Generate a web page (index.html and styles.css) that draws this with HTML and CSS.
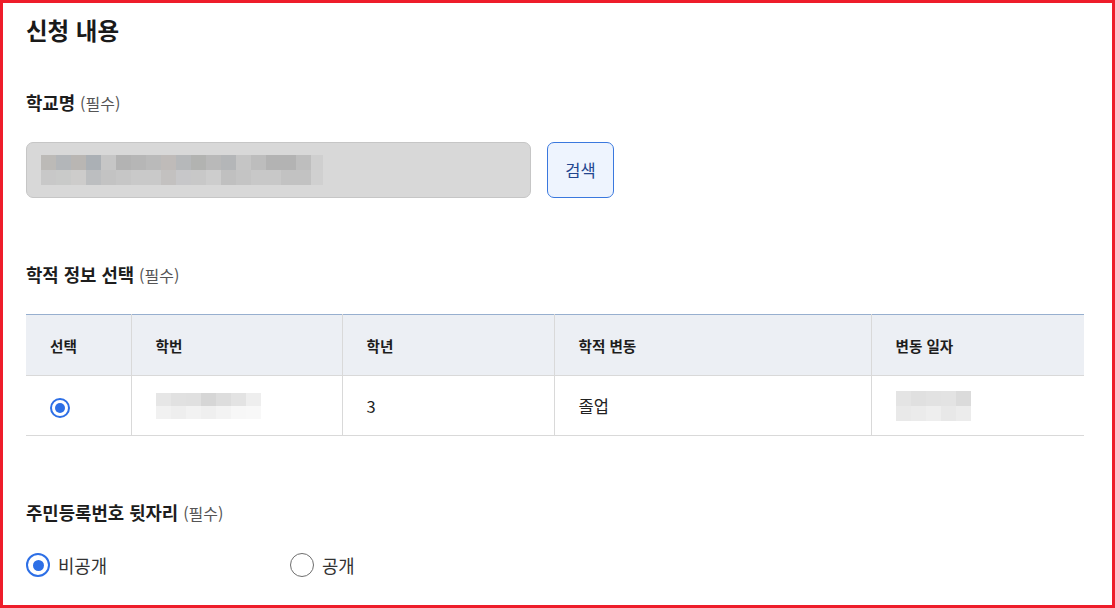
FILE: index.html
```html
<!DOCTYPE html>
<html lang="ko">
<head>
<meta charset="utf-8">
<link rel="stylesheet" href="styles.css">
</head>
<body>
<div class="frame">
  <h2 class="title">신청 내용</h2>

  <div class="label label-school">학교명 <span class="req">(필수)</span></div>
  <div class="search-row">
    <div class="input">
      <div class="mosaic m-school">
        <div class="mrow top"></div>
        <div class="mrow bot"></div>
      </div>
    </div>
    <button class="btn">검색</button>
  </div>

  <div class="label label-record">학적 정보 선택 <span class="req">(필수)</span></div>
  <table class="grid">
    <colgroup>
      <col class="c1"><col class="c2"><col class="c3"><col class="c4"><col class="c5">
    </colgroup>
    <thead>
      <tr><th>선택</th><th>학번</th><th>학년</th><th>학적 변동</th><th>변동 일자</th></tr>
    </thead>
    <tbody>
      <tr>
        <td><span class="radio sm on"></span></td>
        <td><div class="mosaic m-id"><div class="mrow top"></div><div class="mrow bot"></div></div></td>
        <td>3</td>
        <td>졸업</td>
        <td><div class="mosaic m-date"><div class="mrow top"></div><div class="mrow bot"></div></div></td>
      </tr>
    </tbody>
  </table>

  <div class="label label-rrn">주민등록번호 뒷자리 <span class="req">(필수)</span></div>
  <div class="options">
    <label class="opt"><span class="radio on"></span><span>비공개</span></label>
    <label class="opt"><span class="radio"></span><span>공개</span></label>
  </div>
</div>
</body>
</html>
```

FILE: styles.css
```css
* { box-sizing: border-box; }
html, body { margin: 0; padding: 0; background: #fff; }
body {
  font-family: "Noto Sans CJK KR", "Noto Sans", sans-serif;
  color: #1d1d1d;
}
.frame {
  width: 1115px;
  height: 608px;
  border: 3px solid #ee1d2a;
  padding: 11px 28px 0 23px;
  overflow: hidden;
}
.title {
  margin: 0;
  font-size: 23.5px;
  line-height: 32px;
  font-weight: 700;
  color: #1a1a1a;
}
.label {
  font-size: 17.8px;
  line-height: 24px;
  font-weight: 700;
  color: #1d1d1d;
}
.req {
  font-size: 16px;
  font-weight: 400;
  color: #555;
}
.label-school { margin-top: 44px; }
.label-record { margin-top: 64px; }
.label-rrn { margin-top: 64px; }

.search-row {
  display: flex;
  gap: 16px;
  margin-top: 27px;
}
.input {
  width: 505px;
  height: 56px;
  background: #d8d8d8;
  border: 1px solid #c6c6c6;
  border-radius: 7px;
  padding: 12px 0 0 14px;
}
.btn {
  width: 67px;
  height: 56px;
  background: #eef4fe;
  border: 1px solid #3a78de;
  border-radius: 7px;
  font-family: inherit;
  font-size: 16.5px;
  color: #23468f;
  padding: 0;
}

.mosaic { display: flex; flex-direction: column; }
.mrow { height: 50%; }
.m-school { width: 282px; height: 30px; }
.m-school .top {
  background: linear-gradient(to right,
    #bcbab7 0 15px, #b3b6b9 15px 30px, #b9b6b3 30px 45px, #abb0b5 45px 60px,
    #c6c6c6 60px 75px, #b3b3b3 75px 90px, #b6b6b6 90px 105px, #bababa 105px 120px,
    #bfbbb9 120px 135px, #b6b8ba 135px 150px, #b2b3b1 150px 165px, #b9b9b9 165px 180px,
    #b4b6b8 180px 195px, #c5c5c5 195px 210px, #bdbdbd 210px 225px, #b3b3b3 225px 255px,
    #bebebe 255px 270px, #cfcfcf 270px 282px);
}
.m-school .bot {
  background: linear-gradient(to right,
    #c8c8c8 0 15px, #c9cac9 15px 30px, #cdcccb 30px 45px, #bcbec0 45px 60px,
    #c3c3c3 60px 75px, #c6c6c6 75px 90px, #c9c9c9 90px 120px, #c3c1c0 120px 135px,
    #c7c7c9 135px 150px, #c8c8c8 150px 165px, #cdcdcd 165px 180px, #c0c0c0 180px 195px,
    #c4c4c4 195px 210px, #c8c8c8 210px 240px, #c2c2c2 240px 270px, #d0d0d0 270px 282px);
}
.m-id { width: 105px; height: 26px; }
.m-id .top {
  background: linear-gradient(to right,
    #e6e6e6 0 15px, #e1e1e1 15px 30px, #e0e0e0 30px 45px, #d6d6d6 45px 60px,
    #dddddd 60px 75px, #e3e3e3 75px 90px, #eeeeee 90px 105px);
}
.m-id .bot {
  background: linear-gradient(to right,
    #f1f1f1 0 15px, #eeeeee 15px 30px, #f2f2f2 30px 45px, #efefef 45px 60px,
    #f3f3f3 60px 75px, #f7f7f7 75px 90px, #f8f8f8 90px 105px);
}
.m-date { width: 75px; height: 30px; }
.m-date .top {
  background: linear-gradient(to right,
    #e4e4e4 0 15px, #e0e0e0 15px 30px, #e2e2e2 30px 45px, #e3e3e3 45px 60px, #dbdbdb 60px 75px);
}
.m-date .bot {
  background: linear-gradient(to right,
    #e9e9e9 0 15px, #ebebeb 15px 30px, #eeeeee 30px 45px, #e8e8e8 45px 60px, #ececec 60px 75px);
}

.grid {
  margin-top: 27px;
  width: 1058px;
  border-collapse: collapse;
  table-layout: fixed;
  border-top: 1px solid #97afcf;
}
.c1 { width: 105px; }
.c2 { width: 211px; }
.c3 { width: 212px; }
.c4 { width: 317px; }
.c5 { width: 213px; }
.grid th, .grid td {
  text-align: left;
  padding: 0 0 0 24px;
  border-left: 1px solid #d9d9d9;
  border-bottom: 1px solid #d9d9d9;
  vertical-align: middle;
}
.grid th:first-child, .grid td:first-child { border-left: none; }
.grid th {
  height: 61px;
  background: #eceff4;
  font-size: 14.6px;
  font-weight: 700;
  color: #1d1d1d;
}
.grid td {
  height: 60px;
  font-size: 16.5px;
  color: #222;
}

.radio {
  display: inline-block;
  width: 24px;
  height: 24px;
  border: 1.5px solid #6e6e6e;
  border-radius: 50%;
  position: relative;
  flex: none;
}
.radio.on { border: 2px solid #2d6fe6; }
.radio.on::after {
  content: "";
  position: absolute;
  left: 50%;
  top: 50%;
  width: 11px;
  height: 11px;
  margin: -5.5px 0 0 -5.5px;
  border-radius: 50%;
  background: #2d6fe6;
}
.radio.sm { width: 20px; height: 20px; vertical-align: middle; }
.radio.sm::after { width: 10px; height: 10px; margin: -5px 0 0 -5px; }

.options {
  display: flex;
  margin-top: 28px;
}
.opt {
  display: flex;
  align-items: center;
  gap: 8px;
  width: 264px;
  font-size: 17.8px;
  line-height: 24px;
  color: #333;
}
```
